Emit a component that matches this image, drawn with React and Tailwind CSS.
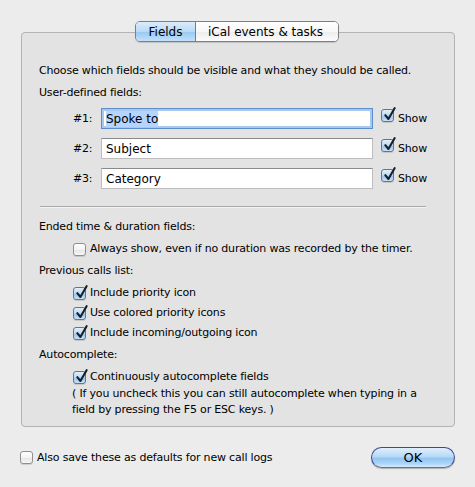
import React from "react";

function Check({ checked }) {
  return (
    <span
      className={
        "relative inline-block w-[13px] h-[13px] shrink-0 rounded-[3px] border " +
        (checked
          ? "border-[#5b7697] bg-[linear-gradient(to_bottom,#e4effa_0%,#bcd7f2_50%,#9cc4ec_55%,#c9e2f8_100%)]"
          : "border-[#8f8f8f] bg-[linear-gradient(to_bottom,#ffffff_0%,#f3f3f3_50%,#e6e6e6_55%,#f7f7f7_100%)]") +
        " shadow-[0_1px_0_rgba(0,0,0,0.12)]"
      }
    >
      {checked && (
        <svg
          className="absolute left-[1px] top-[-3px]"
          width="13"
          height="14"
          viewBox="0 0 13 14"
        >
          <path
            d="M2.3 8.2 L5.4 12 L11.6 1.2"
            fill="none"
            stroke="#18202c"
            strokeWidth="2.1"
            strokeLinecap="round"
            strokeLinejoin="round"
          />
        </svg>
      )}
    </span>
  );
}

function FieldRow({ label, value, focused }) {
  return (
    <div className="flex items-center h-[21px] pl-[34px]">
      <span className="w-[28px] leading-[16px]">{label}</span>
      <div
        className={
          "w-[272px] h-[21px] bg-white flex items-center pl-[4px] text-[12px] tracking-normal " +
          (focused
            ? "border border-[#5e8ccd] shadow-[inset_0_0_0_2px_#a9c8ee]"
            : "border border-[#bdbdbd] border-t-[#8a8a8a]")
        }
      >
        {focused ? <span className="bg-[#b5d5ff] leading-[16px]">{value}</span> : <span className="leading-[16px]">{value}</span>}
      </div>
      <span className="ml-[8px]">
        <Check checked />
      </span>
      <span className="ml-[4px] leading-[16px]">Show</span>
    </div>
  );
}

function CheckRow({ checked, children, className = "" }) {
  return (
    <div className={"flex items-center pl-[34px] h-[16px] " + className}>
      <Check checked={checked} />
      <span className="ml-[4px] leading-[16px] whitespace-nowrap">{children}</span>
    </div>
  );
}

export default function App() {
  return (
    <div className="w-[475px] h-[487px] bg-[#ececec] font-['DejaVu_Sans',sans-serif] text-[11px] tracking-[-0.18px] text-black flex flex-col pt-[32px] px-[20px] overflow-hidden">
      <div className="relative ml-[1px] h-[395px] border border-[#b3b3b3] rounded-[4px] bg-[#e3e3e3] pt-[30px] pl-[17px]">
        <div className="absolute top-[-12px] left-[113px] flex h-[21px] w-[204px] rounded-[5px] border border-[#7f7f7f] overflow-hidden text-[12px] tracking-normal shadow-[0_1px_1px_rgba(0,0,0,0.15)]">
          <div className="w-[60px] flex items-center justify-center border-r border-[#6d7f98] bg-[linear-gradient(to_bottom,#dcecfb_0%,#b9daf7_50%,#98c8f2_52%,#c2e1fb_100%)]">
            Fields
          </div>
          <div className="flex-1 flex items-center justify-center pr-[3px] bg-[linear-gradient(to_bottom,#ffffff_0%,#f7f7f7_50%,#ededed_52%,#fbfbfb_100%)]">
            iCal events &amp; tasks
          </div>
        </div>

        <div className="leading-[16px] whitespace-nowrap">
          Choose which fields should be visible and what they should be called.
        </div>
        <div className="leading-[16px] mt-[6px]">User-defined fields:</div>

        <div className="mt-[7px] flex flex-col gap-[9px]">
          <FieldRow label="#1:" value="Spoke to" focused />
          <FieldRow label="#2:" value="Subject" />
          <FieldRow label="#3:" value="Category" />
        </div>

        <div className="mt-[17px] ml-[1px] w-[386px] h-px bg-[#a9a9a9] shadow-[0_1px_0_#f4f4f4]" />

        <div className="leading-[16px] mt-[12px]">Ended time &amp; duration fields:</div>
        <CheckRow className="mt-[6px]">
          Always show, even if no duration was recorded by the timer.
        </CheckRow>

        <div className="leading-[16px] mt-[6px]">Previous calls list:</div>
        <CheckRow checked className="mt-[6px]">Include priority icon</CheckRow>
        <CheckRow checked className="mt-[4px]">Use colored priority icons</CheckRow>
        <CheckRow checked className="mt-[4px]">Include incoming/outgoing icon</CheckRow>

        <div className="leading-[16px] mt-[6px]">Autocomplete:</div>
        <CheckRow checked className="mt-[6px]">Continuously autocomplete fields</CheckRow>
        <div className="pl-[33px] mt-[1px] leading-[16px]">
          <div className="whitespace-nowrap">( If you uncheck this you can still autocomplete when typing in a</div>
          <div className="whitespace-nowrap">field by pressing the F5 or ESC keys. )</div>
        </div>
      </div>

      <div className="mt-[20px] flex items-center h-[21px]">
        <Check />
        <span className="ml-[4px] leading-[16px]">Also save these as defaults for new call logs</span>
        <div className="ml-auto w-[84px] h-[21px] rounded-full border border-[#3d4a8e] border-b-[#6b6f85] flex items-center justify-center text-[13px] tracking-normal bg-[linear-gradient(to_bottom,#e1effc_0%,#b6d9f7_45%,#93c5f1_55%,#a9d4f7_80%,#d3ebfd_100%)] shadow-[0_1px_1px_rgba(0,0,0,0.25)]">
          OK
        </div>
      </div>
    </div>
  );
}
